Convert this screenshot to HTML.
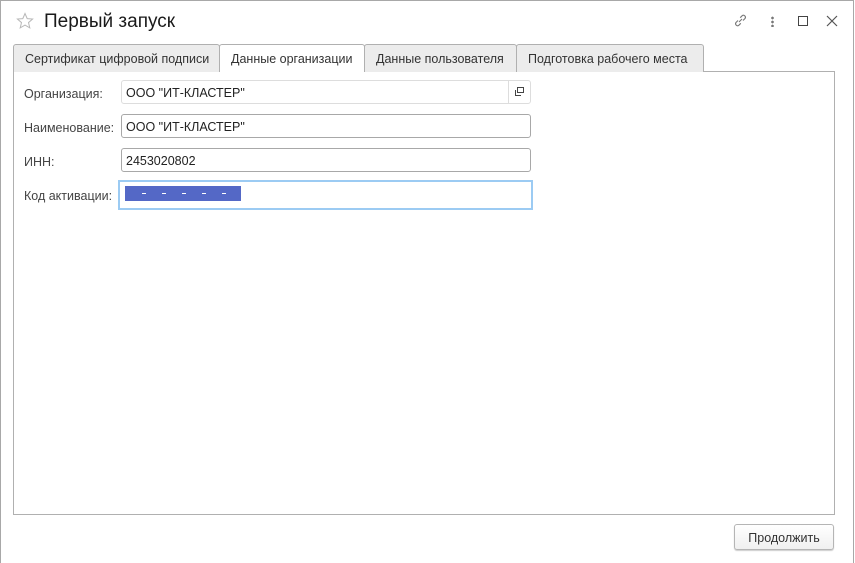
<!DOCTYPE html>
<html><head><meta charset="utf-8"><style>
*{box-sizing:border-box;margin:0;padding:0}
body{width:855px;height:563px;background:#fff;font-family:"Liberation Sans",Arial,sans-serif;font-size:12.5px;color:#333;position:relative;overflow:hidden}
.win{position:absolute;left:0;top:0;width:854px;height:563px;border:1px solid #a8a8a8;border-bottom:none}
.abs{position:absolute}
.title{left:44px;top:11px;font-size:19px;color:#1a1a1a}
.tab{position:absolute;top:44px;height:28px;border:1px solid #b0b0b0;border-bottom:none;background:#ececec;border-radius:3px 3px 0 0;padding:7px 0 0 11px;color:#333;white-space:nowrap}
.tab.act{background:#fff;height:28px;z-index:2}
.panel{left:13px;top:71px;width:822px;height:444px;border:1px solid #b0b0b0}
.lbl{position:absolute;left:24px;color:#444}
.inp{position:absolute;left:121px;width:410px;height:24px;border:1px solid #a8a8a8;border-radius:3px;padding:5px 0 0 4px;color:#222}
.btn{left:734px;top:524px;width:100px;height:26px;border:1px solid #b5b5b5;border-radius:3px;background:linear-gradient(#fff,#f0f0f0);text-align:center;padding-top:6px;color:#333;box-shadow:0 1px 1px #ccc}
.d{position:absolute;top:7px;width:4px;height:1px;background:#fff}
</style></head><body>
<div class="win"></div>
<svg class="abs" style="left:16px;top:12px" width="18" height="18" viewBox="0 0 18 18"><path d="M9 1.5l2.2 5.1 5.4.4-4.1 3.6 1.3 5.3L9 13.1l-4.8 2.8 1.3-5.3L1.4 7l5.4-.4z" fill="none" stroke="#b8b8b8" stroke-width="1"/></svg>
<div class="abs title">Первый запуск</div>
<svg class="abs" style="left:732px;top:12px" width="17" height="17" viewBox="0 0 17 17" fill="none" stroke="#777" stroke-width="1.1"><path d="M7 10l3-3M6 8.5L4 10.5a2 2 0 0 0 2.8 2.8L8.8 11.3M11 8.5l2-2A2 2 0 0 0 10.2 3.7L8.2 5.7"/></svg>
<div class="abs" style="left:771px;top:16px;width:3px;height:11px;background:radial-gradient(circle,#777 1.2px,transparent 1.5px) 0 0/3px 4px"></div>
<div class="abs" style="left:798px;top:16px;width:10px;height:10px;border:1.3px solid #444"></div>
<svg class="abs" style="left:826px;top:15px" width="12" height="12" viewBox="0 0 12 12" stroke="#555" stroke-width="1.2"><path d="M1 1l10 10M11 1L1 11"/></svg>
<div class="abs panel"></div>
<div class="tab" style="left:13px;width:207px">Сертификат цифровой подписи</div>
<div class="tab act" style="left:219px;width:146px">Данные организации</div>
<div class="tab" style="left:364px;width:153px">Данные пользователя</div>
<div class="tab" style="left:516px;width:188px">Подготовка рабочего места</div>
<div class="lbl" style="top:87px">Организация:</div>
<div class="inp" style="top:80px;border-color:#ddd">ООО "ИТ-КЛАСТЕР"</div>
<div class="abs" style="left:508px;top:80px;width:23px;height:24px;border-left:1px solid #ddd"></div>
<svg class="abs" style="left:514px;top:86px" width="11" height="11" viewBox="0 0 11 11" fill="none" stroke="#444" stroke-width="1"><rect x="3.5" y="1.5" width="6" height="5"/><path d="M1.5 4v5.5H7"/></svg>
<div class="lbl" style="top:121px">Наименование:</div>
<div class="inp" style="top:114px">ООО "ИТ-КЛАСТЕР"</div>
<div class="lbl" style="top:155px">ИНН:</div>
<div class="inp" style="top:148px">2453020802</div>
<div class="lbl" style="top:189px">Код активации:</div>
<div class="abs" style="left:118px;top:180px;width:415px;height:30px;border:2px solid #9ccbf3"></div>
<div class="abs" style="left:125px;top:186px;width:116px;height:15px;background:#5468c6">
<div class="d" style="left:17px"></div><div class="d" style="left:37px"></div><div class="d" style="left:57px"></div><div class="d" style="left:77px"></div><div class="d" style="left:97px"></div>
</div>
<div class="abs btn">Продолжить</div>
</body></html>
